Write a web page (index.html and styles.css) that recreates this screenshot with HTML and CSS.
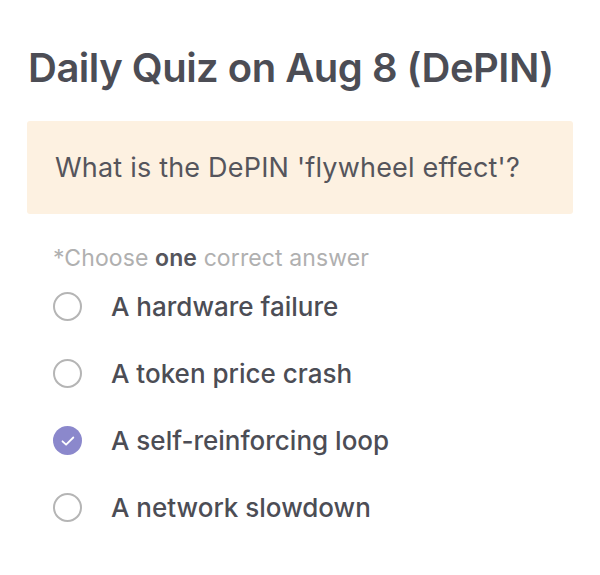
FILE: index.html
```html
<!DOCTYPE html>
<html lang="en">
<head>
    <meta charset="UTF-8">
    <meta name="viewport" content="width=device-width, initial-scale=1.0">
    <title>Daily Quiz</title>
    <link rel="stylesheet" href="styles.css">
</head>
<body>

    <div class="quiz">
        <h1>Daily Quiz on Aug 8 (DePIN)</h1>

        <div class="question">What is the DePIN 'flywheel effect'?</div>

        <p class="hint">*Choose <b>one</b> correct answer</p>

        <ul class="options">
            <li class="option">
                <span class="radio"></span>
                <span class="label">A hardware failure</span>
            </li>
            <li class="option">
                <span class="radio"></span>
                <span class="label">A token price crash</span>
            </li>
            <li class="option">
                <span class="radio checked">
                    <svg width="16" height="16" viewBox="0 0 16 16"><path d="M2.5 8.3l3.6 3.4 7.2-7.2" fill="none" stroke="#fff" stroke-width="1.8" stroke-linecap="round" stroke-linejoin="round"/></svg>
                </span>
                <span class="label">A self-reinforcing loop</span>
            </li>
            <li class="option">
                <span class="radio"></span>
                <span class="label">A network slowdown</span>
            </li>
        </ul>
    </div>

</body>
</html>
```

FILE: styles.css
```css
* {
    margin: 0;
    padding: 0;
    box-sizing: border-box;
}

body {
    font-family: Inter, "Noto Sans", sans-serif;
    background-color: #fff;
    color: #4b4b53;
}

.quiz {
    padding: 40px 27px 0 27px;
}

h1 {
    font-size: 40px;
    font-weight: 600;
    line-height: 56px;
    color: #4c4d55;
    padding-left: 1px;
    letter-spacing: -0.5px;
}

.question {
    margin-top: 25px;
    height: 93px;
    background-color: #fdf1e1;
    border-radius: 3px;
    padding: 0 28px;
    display: flex;
    align-items: center;
    font-size: 27px;
    font-weight: 400;
    letter-spacing: 0.2px;
    color: #55555c;
}

.hint {
    margin-top: 30px;
    padding-left: 26px;
    font-size: 23px;
    line-height: 28px;
    letter-spacing: 0.1px;
    color: #b0b0b0;
}

.hint b {
    font-weight: 600;
    color: #55555c;
}

.options {
    list-style: none;
    padding-left: 26px;
    margin-top: 1px;
}

.option {
    display: flex;
    align-items: center;
    height: 67px;
}

.radio {
    width: 29px;
    height: 29px;
    border: 2px solid #b5b5b5;
    border-radius: 50%;
    display: flex;
    align-items: center;
    justify-content: center;
    flex-shrink: 0;
}

.radio.checked {
    border: none;
    background-color: #8b88cc;
}

.label {
    margin-left: 29px;
    font-size: 26px;
    font-weight: 500;
    color: #4c4d55;
}
```
